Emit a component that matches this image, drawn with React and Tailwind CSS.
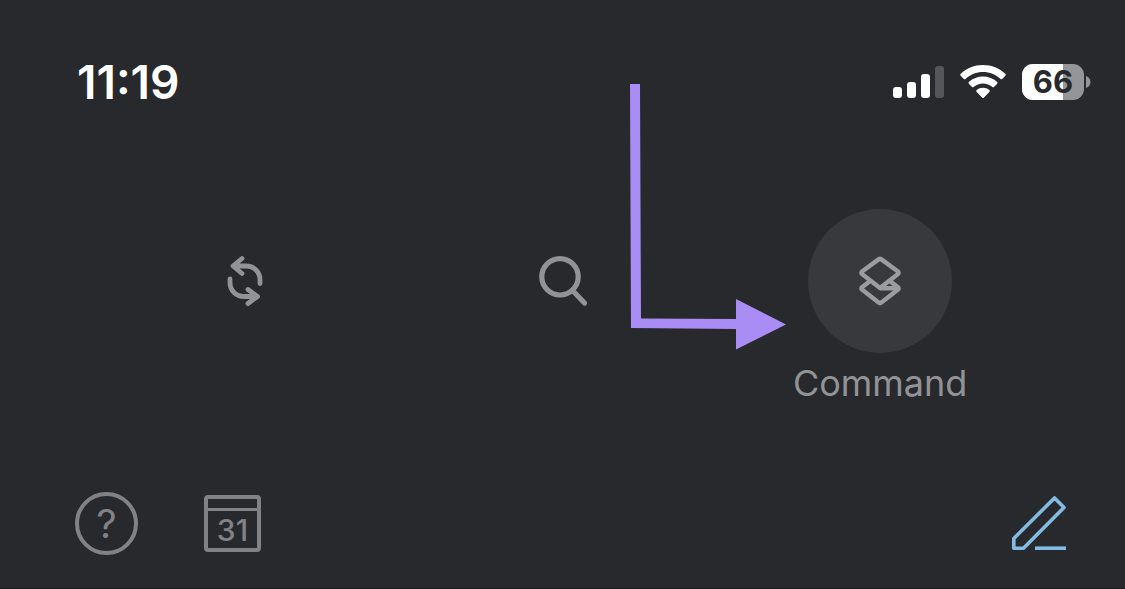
import React from 'react';

const SIGNAL_BARS = [
  { id: 1, className: 'h-[11px] bg-white' },
  { id: 2, className: 'h-4 bg-white' },
  { id: 3, className: 'h-6 bg-white' },
  { id: 4, className: 'h-8 bg-[#55565a]' }
];

const WifiIcon = () => (
  <svg className="w-[46px] h-[34px]" viewBox="0 0 46 34" fill="white" aria-label="Wi-Fi">
    <path d="M23 0C14.400 0 6.600 3.300.8 8.700a1.500 1.500 0 0 0 0 2.200l2.800 2.800a1.500 1.500 0 0 0 2.100 0C10.300 9.500 16.300 7 23 7s12.700 2.500 17.300 6.700a1.500 1.500 0 0 0 2.100 0l2.800-2.800a1.500 1.500 0 0 0 0-2.200C39.400 3.300 31.600 0 23 0z" />
    <path d="M23 11.500c-5.400 0-10.300 2-14 5.300a1.500 1.500 0 0 0 0 2.200l2.800 2.800a1.500 1.500 0 0 0 2.100 0c2.400-2.100 5.600-3.400 9.100-3.400s6.700 1.300 9.100 3.400a1.500 1.500 0 0 0 2.100 0L37 19a1.500 1.500 0 0 0 0-2.200c-3.700-3.300-8.600-5.300-14-5.300z" />
    <path d="M23 22.700c-2.400 0-4.600.9-6.300 2.300a1.300 1.300 0 0 0 0 2l5.300 5.600a1.400 1.400 0 0 0 2 0l5.300-5.600a1.300 1.300 0 0 0 0-2c-1.700-1.400-3.900-2.300-6.300-2.300z" />
  </svg>
);

const Battery = ({ level }) => (
  <div className="flex items-center gap-[2px]">
    <div className="relative w-[62px] h-9 rounded-[11px] overflow-hidden bg-[#949597] flex items-center justify-center">
      <div className="absolute inset-y-0 left-0 bg-white" style={{ width: `${level}%` }} />
      <span className="relative text-[31px] leading-9 font-bold text-[#28292d]">{level}</span>
    </div>
    <svg className="w-[5px] h-3" viewBox="0 0 5 12" fill="#949597">
      <path d="M0 0c3 1 4.500 3.500 4.500 6S3 11 0 12z" />
    </svg>
  </div>
);

const SyncIcon = () => (
  <svg
    className="w-[70px] h-20"
    viewBox="0 1 70 80"
    fill="none"
    stroke="currentColor"
    strokeWidth="4.8"
    strokeLinecap="round"
    strokeLinejoin="round"
  >
    <path d="M32 18.500L23 26l9 7.500M24 26h12c8 0 14 6 14 14V43.500" />
    <path d="M38 49.500l9.500 7-9.500 7M46 56.500H34c-8 0-14-6-14-14V39" />
  </svg>
);

const SearchIcon = () => (
  <svg className="w-20 h-20" viewBox="-3 1 80 80" fill="none" stroke="currentColor" strokeWidth="5.2" strokeLinecap="round">
    <circle cx="35" cy="36.800" r="18.2" />
    <path d="M48 51l11.500 12" />
  </svg>
);

const CommandIcon = () => (
  <svg className="w-[70px] h-[70px]" viewBox="0 1 70 70" fill="none" stroke="currentColor" strokeWidth="4.4" strokeLinejoin="round">
    <path d="M33.600 14.400L17 26.500a1.500 1.500 0 0 0 0 2.400L35 43l18-14.100a1.500 1.500 0 0 0 0-2.400L36.400 14.400a2.300 2.300 0 0 0-2.800 0z" />
    <path d="M24.500 36.500L17 42.200a1.500 1.500 0 0 0 0 2.400l16.600 13a2.300 2.300 0 0 0 2.800 0L53 44.600a1.500 1.500 0 0 0 0-2.400l-7.500-5.700M35 43.300h18" />
  </svg>
);

const PencilIcon = () => (
  <svg className="w-[54px] h-14" viewBox="0 0 54 56" fill="none" stroke="currentColor" strokeWidth="3.6">
    <path d="M1.800 52.200V42.500L42.500 2l9.500 9.500-40.500 40.700z" strokeLinejoin="round" />
    <path d="M23 52.200h31" />
  </svg>
);

// Flecha que señala el botón Command
const PointerArrow = () => (
  <svg
    className="absolute top-[84px] left-[56%] w-[156px] h-[266px] pointer-events-none"
    viewBox="0 0 156 266"
    fill="#a98df5"
  >
    <path d="M0 0h10l1 234.500 95 .5v-20l50 25.500-50 25V245l-105-1z" />
  </svg>
);

const App = () => {
  return (
    <div className="relative min-h-screen flex flex-col bg-[#28292d] border-b border-[#1a1a1d] font-['Inter',sans-serif]">
      {/* Barra de estado */}
      <header className="flex items-center justify-between pt-16 pl-[77px] pr-[34px]">
        <time className="text-[46px] leading-9 font-semibold text-white">11:19</time>
        <div className="flex items-center gap-4">
          <div className="flex items-end gap-[5px] h-8">
            {SIGNAL_BARS.map((bar) => (
              <div key={bar.id} className={`w-[9px] rounded-[3px] ${bar.className}`} />
            ))}
          </div>
          <WifiIcon />
          <Battery level={66} />
        </div>
      </header>

      {/* Acciones */}
      <main className="grid grid-cols-3 justify-items-center items-start px-[86px] pt-[109px] text-[#929395]">
        <button type="button" aria-label="Sync" className="h-36 flex items-center">
          <SyncIcon />
        </button>
        <button type="button" aria-label="Search" className="h-36 flex items-center">
          <SearchIcon />
        </button>
        <button type="button" className="flex flex-col items-center gap-[10px]">
          <span className="w-36 h-36 rounded-full bg-[#38393d] text-[#9b9c9e] flex items-center justify-center">
            <CommandIcon />
          </span>
          <span className="text-[36px] leading-10">Command</span>
        </button>
      </main>

      {/* Barra inferior */}
      <footer className="mt-auto flex items-center justify-between pl-[75px] pr-[59px] pb-[33px] text-[#828286]">
        <div className="flex items-center gap-[66px]">
          <button
            type="button"
            aria-label="Help"
            className="w-[63px] h-[63px] rounded-full border-4 border-current flex items-center justify-center text-[40px] leading-none"
          >
            ?
          </button>
          <button
            type="button"
            aria-label="Calendar"
            className="w-[57px] h-[57px] rounded-[4px] border-4 border-current flex flex-col"
          >
            <span className="w-full h-3 shrink-0 border-b-3 border-current" />
            <span className="w-full flex-1 flex items-center justify-center text-[30px] leading-none font-medium">31</span>
          </button>
        </div>
        <button type="button" aria-label="New note" className="text-[#83bce3]">
          <PencilIcon />
        </button>
      </footer>

      <PointerArrow />
    </div>
  );
};

export default App;
